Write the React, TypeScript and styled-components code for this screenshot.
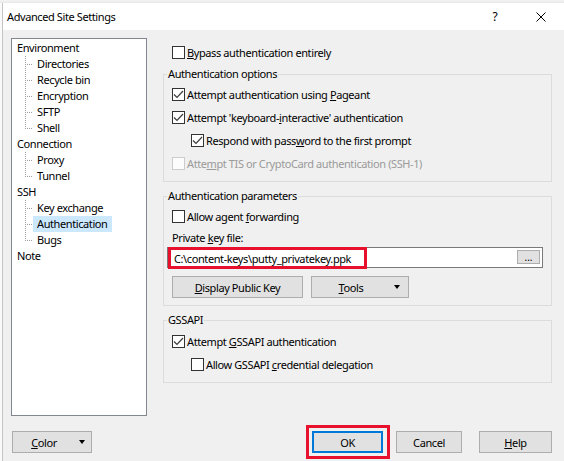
import styled, { createGlobalStyle } from 'styled-components';

const GlobalStyle = createGlobalStyle`
  html, body {
    margin: 0;
    padding: 0;
  }
  body {
    background: #fafafa;
    font-family: 'Noto Sans', 'Open Sans', sans-serif;
    font-size: 11px;
    letter-spacing: -0.4px;
    color: #000;
  }
`;

const Screen = styled.div`
  width: 564px;
  height: 461px;
  display: flex;
  flex-direction: column;
  overflow: hidden;
`;

// a bit of the desktop behind the dialog
const TopStrip = styled.div`
  height: 3px;
  flex: none;
  background: linear-gradient(#f4f4f4, #e8e8e8);
`;

const Window = styled.div`
  flex: 1;
  margin-left: 2px;
  border-left: 1px solid #c4c4c4;
  background: #f0f0f0;
  display: flex;
  flex-direction: column;
`;

const TitleBar = styled.div`
  height: 27px;
  flex: none;
  display: flex;
  align-items: center;
  background: #fff;
`;

const Title = styled.div`
  flex: 1;
  padding-left: 4px;
  line-height: 16px;
`;

const CaptionButton = styled.div`
  width: 46px;
  height: 27px;
  display: flex;
  align-items: center;
  justify-content: center;
  font-size: 12px;
`;

const Content = styled.div`
  display: flex;
  flex: none;
  padding: 8px 0 0 8px;
`;

// ---- tree on the left
const Tree = styled.div`
  width: 136px;
  height: 378px;
  box-sizing: border-box;
  border: 1px solid #828790;
  background: #fff;
  padding-top: 1px;
`;

const TreeRow = styled.div`
  height: 16px;
  display: flex;
  align-items: center;
`;

const TreeLabel = styled.span<{ $root?: boolean; $selected?: boolean }>`
  height: 16px;
  line-height: 16px;
  padding: 0 4px;
  margin-left: ${(p) => (p.$root ? '1px' : '0')};
  background: ${(p) => (p.$selected ? '#cce8ff' : 'transparent')};
  white-space: nowrap;
`;

const BranchSvg = styled.svg`
  flex: none;
  margin-left: 13px;
`;

function Branch({ last }: { last?: boolean }) {
  return (
    <BranchSvg width="8" height="16" viewBox="0 0 8 16">
      <line x1="0.5" y1="0" x2="0.5" y2={last ? 9 : 16} stroke="#a0a0a0" strokeDasharray="1 1" />
      <line x1="2" y1="8.5" x2="8" y2="8.5" stroke="#a0a0a0" strokeDasharray="1 1" />
    </BranchSvg>
  );
}

// ---- right side
const Pane = styled.div`
  width: 389px;
  margin-left: 16px;
  padding-top: 3px;
  display: flex;
  flex-direction: column;
`;

const Group = styled.fieldset<{ $gap: number; $top: number; $bottom?: number }>`
  margin: ${(p) => p.$gap}px 0 0 0;
  padding: ${(p) => p.$top}px 8px ${(p) => p.$bottom ?? 6}px 3px;
  border: 1px solid #dcdcdc;
  min-width: 0;
`;

const Legend = styled.legend`
  padding: 0 1px;
  line-height: 16px;
`;

const Row = styled.div<{ $indent?: number; $disabled?: boolean }>`
  height: 23px;
  display: flex;
  align-items: center;
  padding-left: ${(p) => p.$indent ?? 5}px;
  color: ${(p) => (p.$disabled ? '#9a9a9a' : '#000')};
`;

const Box = styled.span<{ $disabled?: boolean }>`
  width: 13px;
  height: 13px;
  box-sizing: border-box;
  flex: none;
  margin-right: 2px;
  border: 1px solid ${(p) => (p.$disabled ? '#cccccc' : '#333')};
  background: ${(p) => (p.$disabled ? '#fcfcfc' : '#fff')};
  display: flex;
`;

const U = styled.span`
  text-decoration: underline;
  text-underline-offset: 1px;
`;

function Check({ on, disabled }: { on?: boolean; disabled?: boolean }) {
  return (
    <Box $disabled={disabled}>
      {on && (
        <svg width="11" height="11" viewBox="0 0 11 11">
          <path d="M1 5.5 L4 8.5 L10 2" stroke="#3c3c3c" strokeWidth="1.2" fill="none" />
        </svg>
      )}
    </Box>
  );
}

const FieldLabel = styled.div`
  height: 18px;
  display: flex;
  align-items: center;
  padding-left: 5px;
`;

const Field = styled.div`
  height: 21px;
  margin-top: 1px;
  box-sizing: border-box;
  border: 1px solid #7a7a7a;
  background: #fff;
  display: flex;
  align-items: flex-start;
`;

const Highlight = styled.div<{ $w: number; $h: number }>`
  width: ${(p) => p.$w}px;
  height: ${(p) => p.$h}px;
  box-sizing: border-box;
  border: 3px solid #e8112d;
  flex: none;
  display: flex;
  align-items: center;
`;

const PathHighlight = styled(Highlight)`
  margin-top: -1px;
  padding-left: 3px;
  white-space: nowrap;
`;

const BrowseButton = styled.div`
  width: 23px;
  height: 14px;
  margin: 2px 2px 0 auto;
  box-sizing: border-box;
  border: 1px solid #adadad;
  background: #e1e1e1;
  display: flex;
  justify-content: center;
  line-height: 12px;
  font-size: 10px;
  letter-spacing: 0;
`;

const ButtonRow = styled.div`
  display: flex;
  gap: 8px;
  margin-top: 8px;
  padding-left: 5px;
`;

const Button = styled.div<{ $w: number; $primary?: boolean }>`
  width: ${(p) => p.$w}px;
  height: 22px;
  box-sizing: border-box;
  border: ${(p) => (p.$primary ? '2px solid #0078d7' : '1px solid #adadad')};
  background: #e1e1e1;
  display: flex;
  align-items: center;
  justify-content: center;
  flex: none;
`;

const DropButton = styled(Button)`
  justify-content: flex-start;
`;

const DropText = styled.span`
  flex: 1;
  text-align: center;
`;

const Arrow = styled.span<{ $right?: number }>`
  width: 0;
  height: 0;
  margin: 0 ${(p) => p.$right ?? 8}px 0 4px;
  border-left: 3.5px solid transparent;
  border-right: 3.5px solid transparent;
  border-top: 4px solid #000;
`;

// ---- footer
const Footer = styled.div`
  display: flex;
  align-items: center;
  margin-top: 9px;
  padding: 0 12px 0 9px;
`;

const Spacer = styled.div`
  flex: 1;
`;

const OkHighlight = styled(Highlight)`
  padding: 3px;
  margin-right: 6px;
`;

const CancelButton = styled(Button)`
  margin-right: 17px;
`;

const tree = [
  { label: 'Environment', children: ['Directories', 'Recycle bin', 'Encryption', 'SFTP', 'Shell'] },
  { label: 'Connection', children: ['Proxy', 'Tunnel'] },
  { label: 'SSH', children: ['Key exchange', 'Authentication', 'Bugs'] },
  { label: 'Note', children: [] as string[] },
];

export default function App() {
  return (
    <Screen>
      <GlobalStyle />
      <TopStrip />
      <Window>
        <TitleBar>
          <Title>Advanced Site Settings</Title>
          <CaptionButton>?</CaptionButton>
          <CaptionButton>
            <svg width="10" height="10" viewBox="0 0 10 10">
              <path d="M0.5 0.5 L9.5 9.5 M9.5 0.5 L0.5 9.5" stroke="#000" strokeWidth="1" />
            </svg>
          </CaptionButton>
        </TitleBar>

        <Content>
          <Tree>
            {tree.map((node) => (
              <div key={node.label}>
                <TreeRow>
                  <TreeLabel $root>{node.label}</TreeLabel>
                </TreeRow>
                {node.children.map((child, i) => (
                  <TreeRow key={child}>
                    <Branch last={i === node.children.length - 1} />
                    <TreeLabel $selected={child === 'Authentication'}>{child}</TreeLabel>
                  </TreeRow>
                ))}
              </div>
            ))}
          </Tree>

          <Pane>
            <Row $indent={9}>
              <Check />
              <span>
                <U>B</U>ypass authentication entirely
              </span>
            </Row>

            <Group $gap={2} $top={1}>
              <Legend>Authentication options</Legend>
              <Row>
                <Check on />
                <span>
                  Attempt authentication using <U>P</U>ageant
                </span>
              </Row>
              <Row>
                <Check on />
                <span>
                  Attempt 'keyboard-<U>i</U>nteractive' authentication
                </span>
              </Row>
              <Row $indent={24}>
                <Check on />
                <span>
                  Respond with pass<U>w</U>ord to the first prompt
                </span>
              </Row>
              <Row $disabled>
                <Check disabled />
                <span>
                  Atte<U>m</U>pt TIS or CryptoCard authentication (SSH-1)
                </span>
              </Row>
            </Group>

            <Group $gap={6} $top={1} $bottom={7}>
              <Legend>Authentication parameters</Legend>
              <Row>
                <Check />
                <span>
                  Allow agent <U>f</U>orwarding
                </span>
              </Row>
              <FieldLabel>
                <span>
                  Private <U>k</U>ey file:
                </span>
              </FieldLabel>
              <Field>
                <PathHighlight $w={199} $h={22}>C:\content-keys\putty_privatekey.ppk</PathHighlight>
                <BrowseButton>...</BrowseButton>
              </Field>
              <ButtonRow>
                <Button $w={131}>
                  <span>
                    <U>D</U>isplay Public Key
                  </span>
                </Button>
                <DropButton $w={98}>
                  <DropText>
                    <U>T</U>ools
                  </DropText>
                  <Arrow />
                </DropButton>
              </ButtonRow>
            </Group>

            <Group $gap={6} $top={2}>
              <Legend>GSSAPI</Legend>
              <Row>
                <Check on />
                <span>
                  Attempt <U>G</U>SSAPI authentication
                </span>
              </Row>
              <Row $indent={24}>
                <Check />
                <span>
                  Allow GSSAPI <U>c</U>redential delegation
                </span>
              </Row>
            </Group>
          </Pane>
        </Content>

        <Footer>
          <DropButton $w={80}>
            <DropText>
              <U>C</U>olor
            </DropText>
            <Arrow $right={6} />
          </DropButton>
          <Spacer />
          <OkHighlight $w={84} $h={34}>
            <Button $w={71} $primary>
              OK
            </Button>
          </OkHighlight>
          <CancelButton $w={66}>Cancel</CancelButton>
          <Button $w={73}>
            <span>
              <U>H</U>elp
            </span>
          </Button>
        </Footer>
      </Window>
    </Screen>
  );
}
